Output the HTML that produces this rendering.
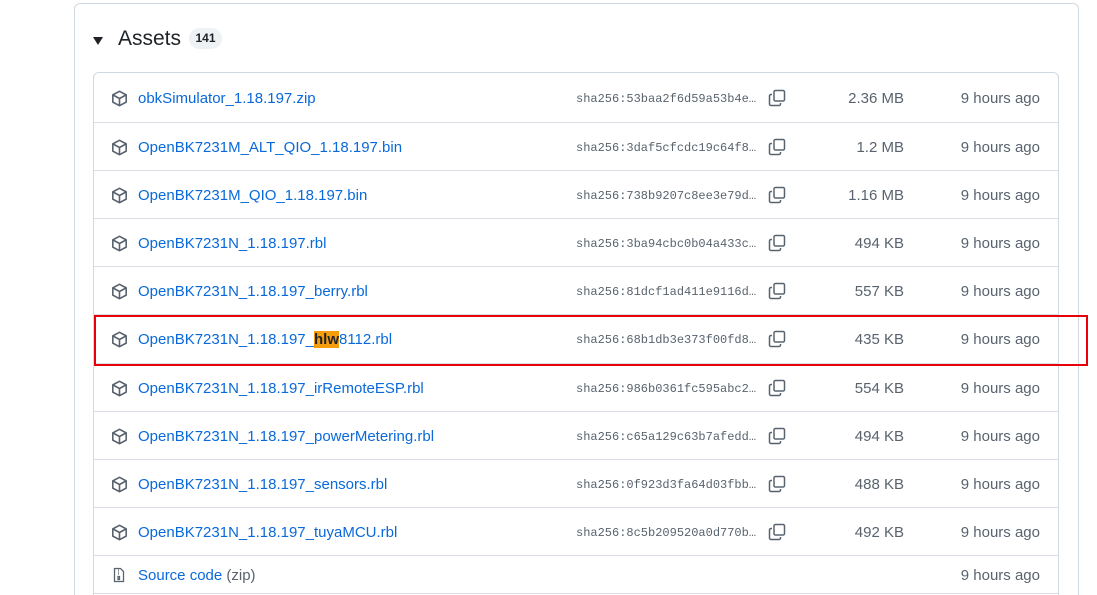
<html><head><style>
html,body{margin:0;width:1097px;height:595px;overflow:hidden;background:#fff;font-family:"Liberation Sans",sans-serif;position:relative}
.a{position:absolute}
.row{position:absolute;left:94px;width:964px;height:48px;border-top:1px solid #d8dee4}
.row .ic{position:absolute;left:17px;top:16px}
.row .n{position:absolute;left:44px;top:16px;font-size:15px;color:#0969da}
.row .h{position:absolute;left:482px;top:18px;font-family:"Liberation Mono",monospace;font-size:12px;color:#59636e}
.row .c{position:absolute;left:674px;top:15px}
.row .s{position:absolute;right:154px;top:16px;font-size:15px;color:#59636e}
.row .t{position:absolute;right:18px;top:16px;font-size:15px;color:#59636e}
mark{background:#f69d0c;color:#1f2328;font-weight:bold}
</style></head><body>
<div class="a" style="left:74px;top:3px;width:1003px;height:592px;border:1px solid #d1d9e0;border-bottom:none;border-radius:6px 6px 0 0"></div>
<div class="a" style="left:93px;top:37px;width:0;height:0;border-left:5px solid transparent;border-right:5px solid transparent;border-top:8px solid #1f2328"></div>
<div class="a" style="left:118px;top:27px;font-size:21px;color:#1f2328">Assets</div>
<div class="a" style="left:189px;top:28px;width:33px;height:21px;border-radius:11px;background:#eff2f5;font-size:12px;font-weight:bold;color:#1f2328;text-align:center;line-height:21px">141</div>
<div class="a" style="left:93px;top:72px;width:964px;height:523px;border:1px solid #d1d9e0;border-bottom:none;border-radius:6px 6px 0 0"></div>
<div id="rows"></div>
<div class="a" style="left:94px;top:315px;width:990px;height:47px;border:2px solid #e8000b"></div>
<script>
var d=[["obkSimulator_1.18.197.zip","53baa2f6d59a53b4e","2.36 MB"],
["OpenBK7231M_ALT_QIO_1.18.197.bin","3daf5cfcdc19c64f8","1.2 MB"],
["OpenBK7231M_QIO_1.18.197.bin","738b9207c8ee3e79d","1.16 MB"],
["OpenBK7231N_1.18.197.rbl","3ba94cbc0b04a433c","494 KB"],
["OpenBK7231N_1.18.197_berry.rbl","81dcf1ad411e9116d","557 KB"],
["OpenBK7231N_1.18.197_<mark>hlw</mark>8112.rbl","68b1db3e373f00fd8","435 KB"],
["OpenBK7231N_1.18.197_irRemoteESP.rbl","986b0361fc595abc2","554 KB"],
["OpenBK7231N_1.18.197_powerMetering.rbl","c65a129c63b7afedd","494 KB"],
["OpenBK7231N_1.18.197_sensors.rbl","0f923d3fa64d03fbb","488 KB"],
["OpenBK7231N_1.18.197_tuyaMCU.rbl","8c5b209520a0d770b","492 KB"]];
var box='<svg class="ic" width="17" height="17" viewBox="0 0 16 16" fill="none" stroke="#59636e" stroke-width="1.5" stroke-linejoin="round"><path d="M8 1.2 14.3 4.6v6.8L8 14.8 1.7 11.4V4.6Z"/><path d="M1.9 4.7 8 8l6.1-3.3M8 8v6.6"/></svg>';
var cp='<svg class="c" width="18" height="18" viewBox="0 0 18 18" fill="none" stroke="#59636e" stroke-width="1.5"><rect x="6" y="1.5" width="10.5" height="10.5" rx="1.5"/><path d="M4 5.5H3A1.5 1.5 0 0 0 1.5 7v8A1.5 1.5 0 0 0 3 16.5h8A1.5 1.5 0 0 0 12.5 15v-1"/></svg>';
var h='',tops=[74,122,170,218,266,314,363,411,459,507];
d.forEach(function(r,i){h+='<div class="row" style="top:'+tops[i]+'px;'+(i==0?'border-top:none':'')+'">'+box+'<div class="n">'+r[0]+'</div><div class="h">sha256:'+r[1]+'…</div>'+cp+'<div class="s">'+r[2]+'</div><div class="t">9 hours ago</div></div>';});
h+='<div class="row" style="top:555px;height:37px;border-bottom:1px solid #d8dee4"><svg class="ic" style="top:11px" width="16" height="16" viewBox="0 0 16 16" fill="none" stroke="#59636e" stroke-width="1.3"><path d="M3.5 1.5h6l3 3v10h-9z"/><path d="M7 3h1M7 5h1M7 7h1M7 9.5h1.5v3H7z"/></svg><div class="n" style="top:11px">Source code <span style="color:#59636e">(zip)</span></div><div class="t" style="top:11px">9 hours ago</div></div>';
document.getElementById('rows').innerHTML=h;
</script>
</body></html>
